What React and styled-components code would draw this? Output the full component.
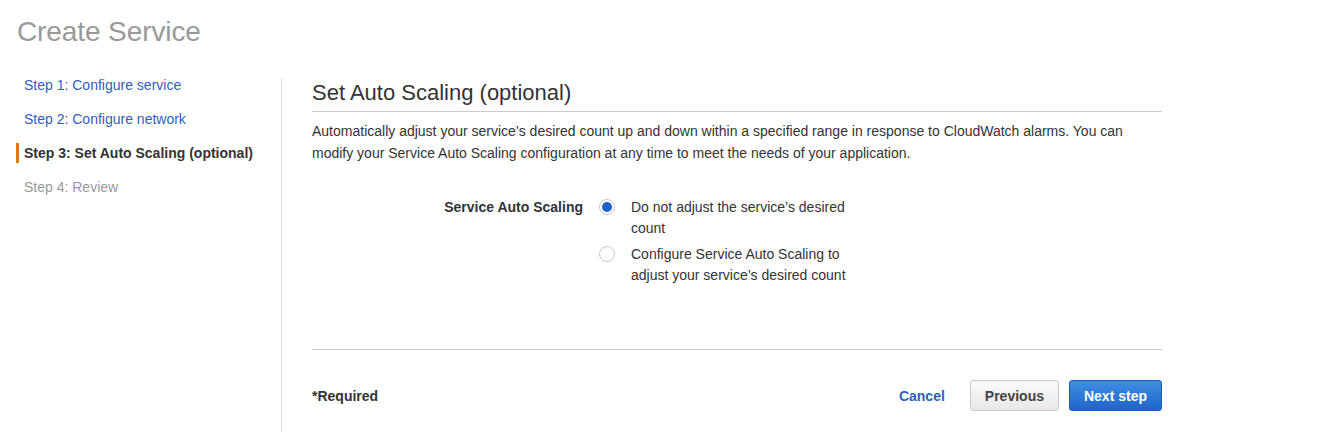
import React, { useState } from 'react';
import styled, { createGlobalStyle } from 'styled-components';

const GlobalStyle = createGlobalStyle`
  body {
    margin: 0;
    background: #fff;
    font-family: "Liberation Sans", Arial, sans-serif;
    color: #333;
  }
`;

const Page = styled.div`
  min-height: 432px;
`;

const PageHeader = styled.div`
  padding: 16px 17px 20px;
`;

const PageTitle = styled.h1`
  margin: 0;
  font-size: 28px;
  line-height: 32px;
  font-weight: 400;
  color: #999;
  letter-spacing: -0.1px;
`;

const Body = styled.div`
  display: flex;
  align-items: stretch;
`;

const Sidebar = styled.nav`
  width: 281px;
  flex-shrink: 0;
  box-sizing: border-box;
  padding: 7px 0 0 16px;
  display: flex;
  flex-direction: column;
  gap: 14px;
`;

const StepItem = styled.a`
  display: block;
  font-size: 14px;
  line-height: 20px;
  padding-left: 5px;
  border-left: 3px solid ${p => (p.$active ? '#e07b10' : 'transparent')};
  font-weight: ${p => (p.$active ? 700 : 400)};
  color: ${p => (p.$active ? '#333' : p.$disabled ? '#999' : '#2f5fbd')};
  text-decoration: none;
  cursor: ${p => (p.$disabled ? 'default' : 'pointer')};
`;

const Main = styled.main`
  margin-top: 10px;
  border-left: 1px solid #ddd;
  padding-left: 30px;
  width: 850px;
  min-height: 354px;
`;

const SectionTitle = styled.h2`
  margin: 0;
  padding: 2px 0 5px;
  font-size: 22px;
  line-height: 26px;
  font-weight: 400;
  color: #333;
  border-bottom: 1px solid #ccc;
`;

const Intro = styled.p`
  margin: 8px 0 0;
  font-size: 14px;
  line-height: 22px;
  color: #333;
`;

const FormRow = styled.div`
  display: grid;
  grid-template-columns: 271px 1fr;
  column-gap: 16px;
  margin-top: 33px;
`;

const FieldLabel = styled.div`
  text-align: right;
  font-weight: 700;
  font-size: 14px;
  line-height: 21px;
  color: #333;
`;

const Options = styled.div`
  display: flex;
  flex-direction: column;
  gap: 5px;
`;

const Option = styled.label`
  display: flex;
  align-items: flex-start;
  gap: 16px;
  cursor: pointer;
`;

const Radio = styled.span`
  flex-shrink: 0;
  box-sizing: border-box;
  width: 16px;
  height: 16px;
  margin-top: 2px;
  border-radius: 50%;
  border: 1px solid #c8c8c8;
  background: #fff;
  display: flex;
  align-items: center;
  justify-content: center;

  &::after {
    content: '';
    width: 10px;
    height: 10px;
    border-radius: 50%;
    background: ${p => (p.$checked ? '#1e63c9' : 'transparent')};
  }
`;

const OptionText = styled.span`
  width: 232px;
  font-size: 14px;
  line-height: 21px;
  color: #333;
`;

const Footer = styled.div`
  margin-top: 63px;
  border-top: 1px solid #ccc;
  padding-top: 30px;
  display: flex;
  align-items: center;
`;

const Required = styled.span`
  font-size: 14px;
  font-weight: 700;
  color: #333;
  flex: 1;
`;

const Actions = styled.div`
  display: flex;
  align-items: center;
  gap: 10px;
`;

const LinkButton = styled.a`
  font-size: 14px;
  font-weight: 700;
  color: #2f5fbd;
  margin-right: 15px;
  cursor: pointer;
`;

const Button = styled.button`
  height: 31px;
  padding: 0 14px;
  border-radius: 3px;
  font-family: inherit;
  font-size: 14px;
  font-weight: 700;
  cursor: pointer;
  border: 1px solid ${p => (p.$primary ? '#1b5cb8' : '#c9c9c9')};
  color: ${p => (p.$primary ? '#fff' : '#444')};
  background: ${p =>
    p.$primary
      ? 'linear-gradient(#3f8de4, #1f65c8)'
      : 'linear-gradient(#fafafa, #e8e8e8)'};
`;

const steps = [
  { label: 'Step 1: Configure service' },
  { label: 'Step 2: Configure network' },
  { label: 'Step 3: Set Auto Scaling (optional)', active: true },
  { label: 'Step 4: Review', disabled: true },
];

const options = [
  "Do not adjust the service\u2019s desired count",
  "Configure Service Auto Scaling to adjust your service\u2019s desired count",
];

export default function App() {
  const [choice, setChoice] = useState(0);

  return (
    <Page>
      <GlobalStyle />
      <PageHeader>
        <PageTitle>Create Service</PageTitle>
      </PageHeader>
      <Body>
        <Sidebar>
          {steps.map(s => (
            <StepItem key={s.label} $active={s.active} $disabled={s.disabled}>
              {s.label}
            </StepItem>
          ))}
        </Sidebar>
        <Main>
          <SectionTitle>Set Auto Scaling (optional)</SectionTitle>
          <Intro>
            Automatically adjust your service’s desired count up and down within a specified range in
            response to CloudWatch alarms. You can modify your Service Auto Scaling configuration at any
            time to meet the needs of your application.
          </Intro>
          <FormRow>
            <FieldLabel>Service Auto Scaling</FieldLabel>
            <Options>
              {options.map((text, i) => (
                <Option key={text} onClick={() => setChoice(i)}>
                  <Radio $checked={choice === i} />
                  <OptionText>{text}</OptionText>
                </Option>
              ))}
            </Options>
          </FormRow>
          <Footer>
            <Required>*Required</Required>
            <Actions>
              <LinkButton>Cancel</LinkButton>
              <Button>Previous</Button>
              <Button $primary>Next step</Button>
            </Actions>
          </Footer>
        </Main>
      </Body>
    </Page>
  );
}
